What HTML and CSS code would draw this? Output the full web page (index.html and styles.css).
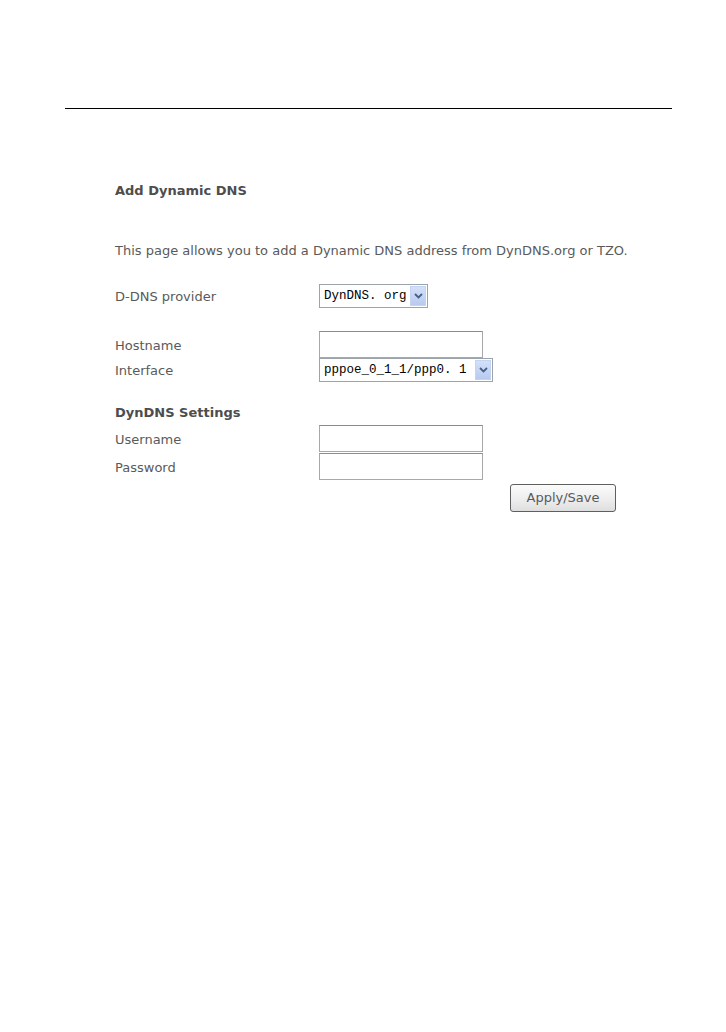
FILE: index.html
```html
<!DOCTYPE html>
<html>
<head>
<meta charset="utf-8">
<title>Add Dynamic DNS</title>
<link rel="stylesheet" href="styles.css">
</head>
<body>
<div class="page">
  <div class="rule"></div>
  <div class="content">
    <div class="title">Add Dynamic DNS</div>
    <div class="desc">This page allows you to add a Dynamic DNS address from DynDNS.org or TZO.</div>

    <div class="row row-provider">
      <div class="label">D-DNS provider</div>
      <div class="field">
        <div class="select select-provider">
          <span class="select-text">DynDNS. org</span>
          <span class="select-arrow"><svg width="9" height="6" viewBox="0 0 9 6"><path d="M1 1 L4.5 4.5 L8 1" fill="none" stroke="#4a5f86" stroke-width="1.8"/></svg></span>
        </div>
      </div>
    </div>

    <div class="row row-host">
      <div class="label">Hostname</div>
      <div class="field"><div class="input"></div></div>
    </div>
    <div class="row row-iface">
      <div class="label">Interface</div>
      <div class="field">
        <div class="select select-iface">
          <span class="select-text">pppoe_0_1_1/ppp0. 1</span>
          <span class="select-arrow"><svg width="9" height="6" viewBox="0 0 9 6"><path d="M1 1 L4.5 4.5 L8 1" fill="none" stroke="#4a5f86" stroke-width="1.8"/></svg></span>
        </div>
      </div>
    </div>

    <div class="subhead">DynDNS Settings</div>
    <div class="row row-user">
      <div class="label">Username</div>
      <div class="field"><div class="input"></div></div>
    </div>
    <div class="row row-pass">
      <div class="label">Password</div>
      <div class="field"><div class="input"></div></div>
    </div>
    <div class="row row-btn">
      <div class="label"></div>
      <div class="field"><div class="button">Apply/Save</div></div>
    </div>
  </div>
</div>
</body>
</html>
```
FILE: styles.css
```css
html, body {
  margin: 0;
  padding: 0;
  background: #ffffff;
}
body {
  font-family: "DejaVu Sans", Verdana, sans-serif;
  color: #5a5a5a;
}
.page {
  width: 726px;
  height: 1032px;
  padding-top: 108px;
  box-sizing: border-box;
}
.rule {
  margin-left: 65px;
  width: 607px;
  height: 0;
  border-top: 1px solid #000;
}
.content {
  padding-left: 115px;
}
.title {
  margin-top: 74px;
  font-size: 13px;
  font-weight: bold;
  line-height: 16px;
  color: #4d4d4d;
}
.desc {
  margin-top: 44px;
  font-size: 13px;
  line-height: 16px;
}
.row {
  display: flex;
  align-items: center;
}
.label {
  width: 204px;
  font-size: 13px;
  line-height: 16px;
  padding-top: 2px;
}
.field {
  display: flex;
  align-items: center;
}
.row-provider {
  margin-top: 24px;
  height: 26px;
}
.row-host {
  margin-top: 22px;
  height: 27px;
}
.row-iface {
  margin-top: 1px;
  height: 22px;
}
.subhead {
  margin-top: 20px;
  height: 24px;
  line-height: 24px;
  font-size: 13px;
  font-weight: bold;
  color: #4d4d4d;
}
.row-user {
  height: 27px;
}
.row-pass {
  margin-top: 1px;
  height: 27px;
}
.row-btn {
  margin-top: 4px;
  height: 28px;
}
.input {
  width: 162px;
  height: 25px;
  border: 1px solid #a8a8a8;
  border-top-color: #8c8c8c;
  background: #fff;
}
.select {
  display: flex;
  align-items: stretch;
  height: 20px;
  border: 1px solid #9ba3ab;
  background: #fff;
  padding: 1px;
}
.select-provider {
  width: 105px;
}
.select-iface {
  width: 170px;
}
.select-text {
  flex: 1;
  font-family: "Liberation Mono", "DejaVu Sans Mono", monospace;
  font-size: 12.5px;
  line-height: 20px;
  color: #000;
  padding-left: 3px;
  white-space: nowrap;
}
.select-arrow {
  width: 16px;
  display: flex;
  align-items: center;
  justify-content: center;
  background: linear-gradient(#d3e0f9, #b7caf0);
  border: 1px solid #c3d3f3;
  box-sizing: border-box;
}
.button {
  margin-left: 191px;
  width: 104px;
  height: 26px;
  border: 1px solid #5f5f5f;
  border-radius: 3px;
  background: linear-gradient(#fbfbfb, #ececec 60%, #dedede);
  font-size: 13px;
  line-height: 26px;
  text-align: center;
  color: #5a5a5a;
}
```
